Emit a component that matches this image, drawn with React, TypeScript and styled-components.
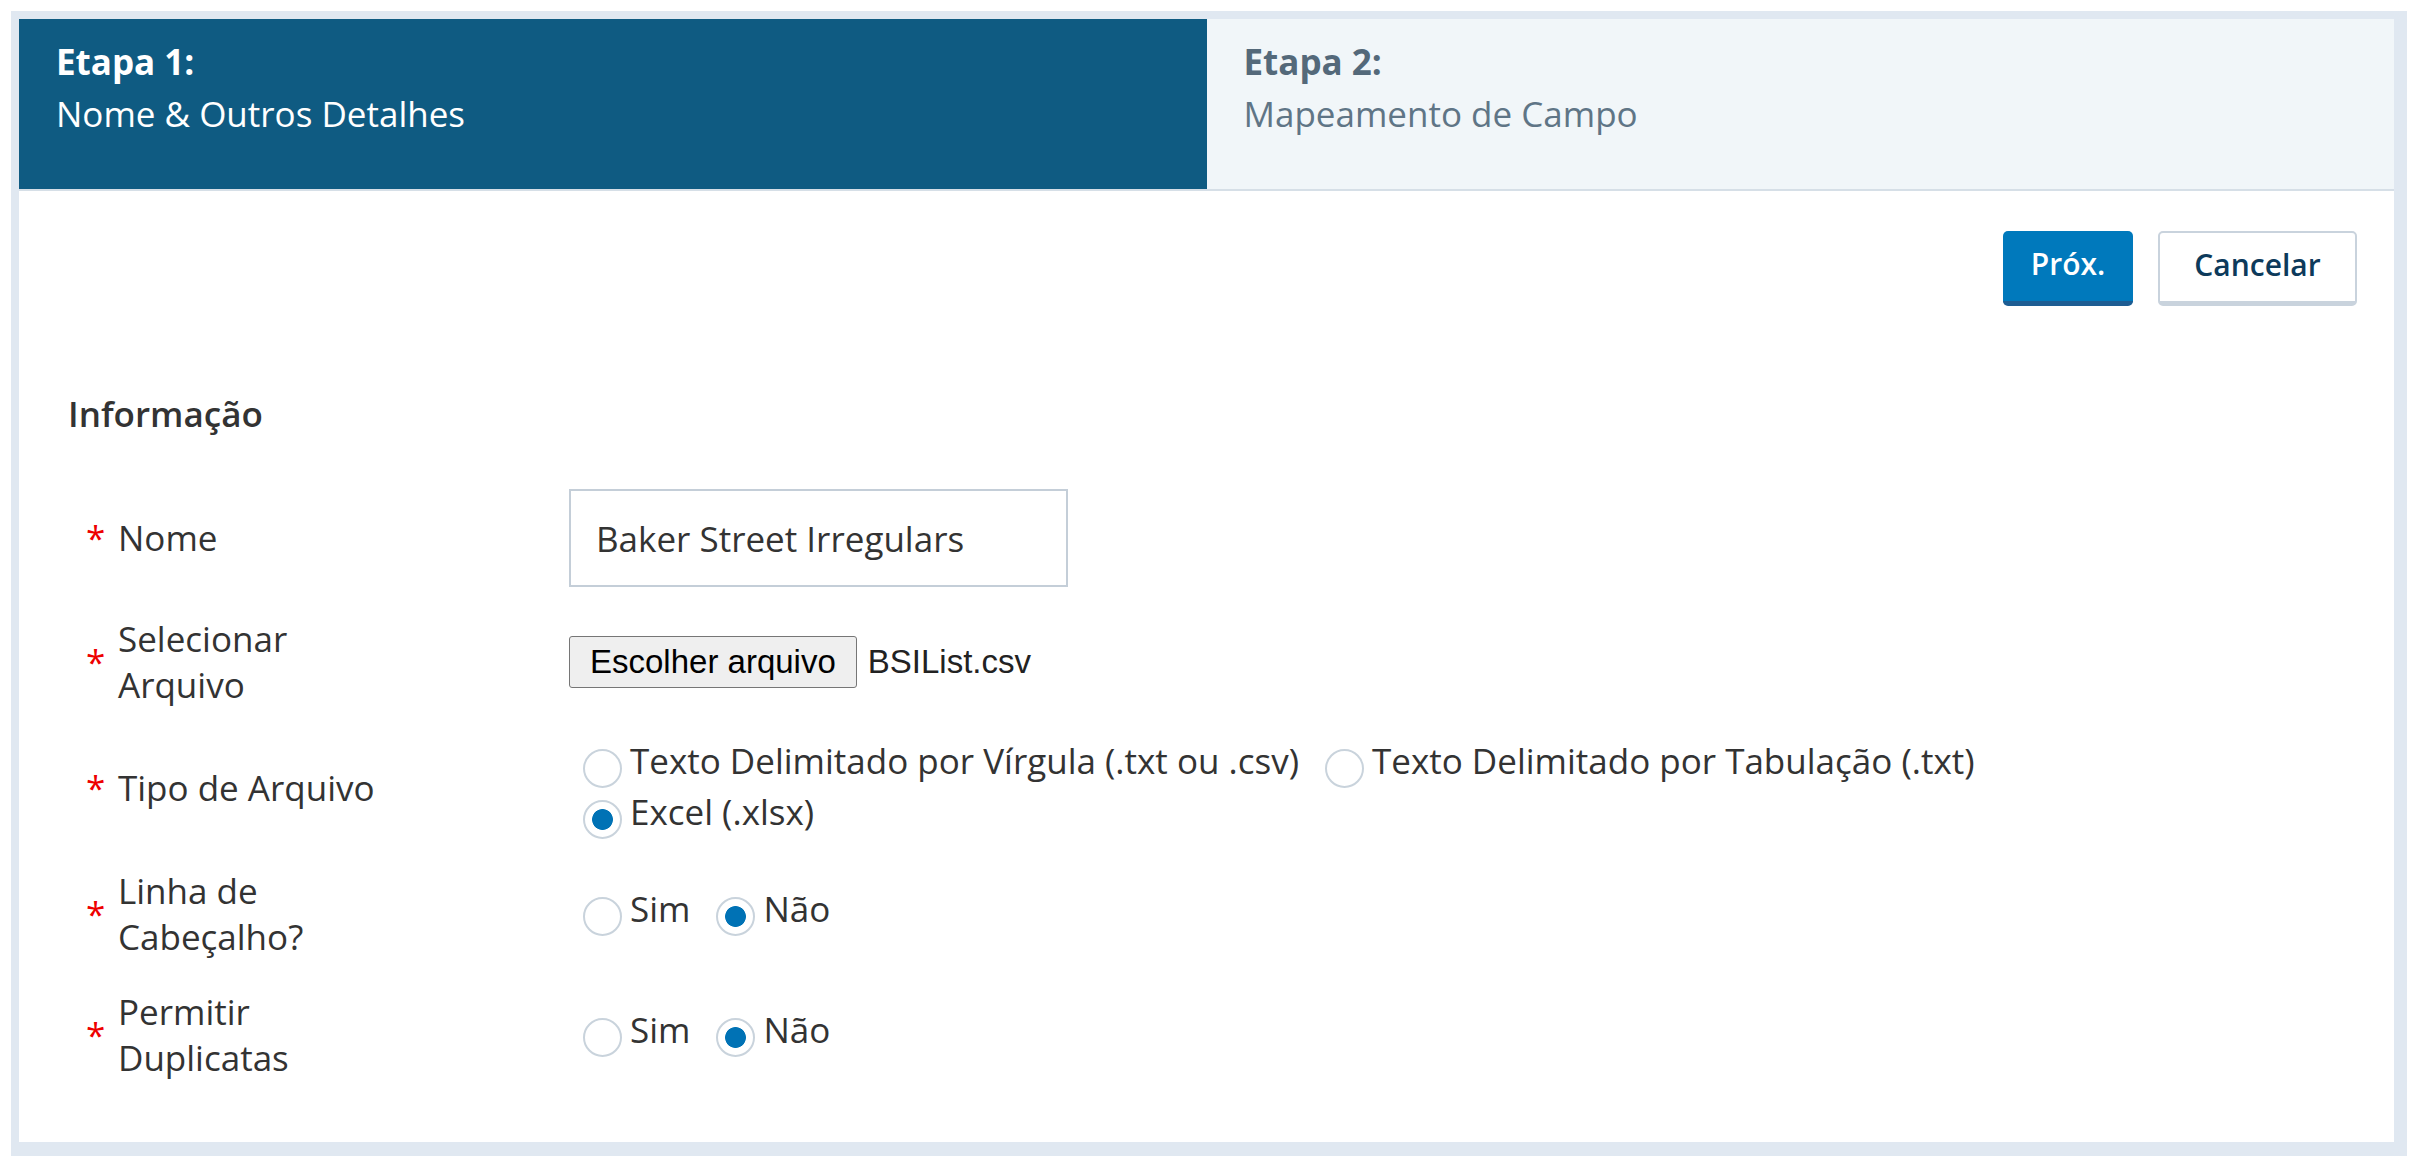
import React from "react";
import styled, { createGlobalStyle, css } from "styled-components";

const GlobalStyle = createGlobalStyle`
  html, body {
    margin: 0;
    padding: 0;
    background: #ffffff;
  }
  body {
    font-family: "Open Sans", "Noto Sans", Arial, sans-serif;
    color: #333333;
  }
  * { box-sizing: border-box; }
`;

const Frame = styled.div`
  margin: 11px 12px 13px 11px;
  border-style: solid;
  border-color: #e0e8f1;
  border-width: 8px 13px 14px 8px;
  background: #ffffff;
`;

const StepHeader = styled.div`
  display: grid;
  grid-template-columns: 1fr 1fr;
  border-bottom: 2px solid #d6dfe7;
`;

const Step = styled.div<{ $active?: boolean }>`
  height: 170px;
  padding: 20px 36px 0 37px;
  background: ${(p) => (p.$active ? "#0f5b82" : "#f1f6f9")};
  color: ${(p) => (p.$active ? "#ffffff" : "#5f7586")};
`;

const StepTitle = styled.div<{ $active?: boolean }>`
  font-size: 35px;
  line-height: 46px;
  font-weight: 700;
  margin-bottom: 6px;
  color: ${(p) => (p.$active ? "#ffffff" : "#54697a")};
`;

const StepName = styled.div`
  font-size: 35px;
  line-height: 46px;
  font-weight: 400;
`;

const Body = styled.div`
  padding: 40px 37px 61px 49px;
`;

const Toolbar = styled.div`
  display: flex;
  justify-content: flex-end;
  gap: 25px;
`;

const Button = styled.button<{ $variant: "brand" | "neutral" }>`
  height: 75px;
  display: inline-flex;
  align-items: center;
  justify-content: center;
  padding: 0 0 6px;
  font-family: "Open Sans", Arial, sans-serif;
  font-size: 30px;
  font-weight: 600;
  border-radius: 5px;
  cursor: pointer;
  ${(p) =>
    p.$variant === "brand"
      ? css`
          width: 130px;
          background: #0079bc;
          color: #ffffff;
          border: none;
          border-bottom: 5px solid #1d5d93;
        `
      : css`
          width: 199px;
          background: #ffffff;
          color: #0d3a5b;
          border: 2px solid #c9d3dd;
          border-bottom-width: 5px;
        `}
`;

const SectionTitle = styled.h2`
  margin: 85px 0 0;
  font-size: 35px;
  line-height: 46px;
  font-weight: 600;
  color: #333333;
`;

const FormGrid = styled.div`
  margin: 52px 0 0 18px;
  display: grid;
  grid-template-columns: 483px 1fr;
  row-gap: 29px;
  align-items: center;
`;

const LabelCell = styled.div`
  display: flex;
  align-items: center;
`;

const Asterisk = styled.span`
  width: 32px;
  flex-shrink: 0;
  color: #ee0000;
  font-size: 35px;
  line-height: 46px;
`;

const LabelText = styled.span`
  max-width: 280px;
  font-size: 35px;
  line-height: 46px;
  color: #333333;
`;

const Control = styled.div`
  display: flex;
  align-items: center;
  max-width: 1500px;
`;

const TextInput = styled.input`
  width: 499px;
  height: 98px;
  border: 2px solid #c4ced8;
  border-radius: 0;
  padding: 0 25px;
  font-family: "Open Sans", Arial, sans-serif;
  font-size: 35px;
  color: #333333;
  outline: none;
`;

const FileButton = styled.button`
  height: 52px;
  padding: 0 20px;
  border: 1px solid #767676;
  border-radius: 3px;
  background: #efefef;
  font-family: "Liberation Sans", Arial, sans-serif;
  font-size: 33px;
  color: #000000;
`;

const FileName = styled.span`
  margin-left: 11px;
  font-family: "Liberation Sans", Arial, sans-serif;
  font-size: 33px;
  color: #222222;
`;

const RadioGroup = styled.div<{ $raise?: boolean }>`
  display: flex;
  flex-wrap: wrap;
  column-gap: 26px;
  padding-left: 14px;
  margin-bottom: ${(p) => (p.$raise ? "8px" : "0")};
`;

const RadioOption = styled.label`
  display: inline-flex;
  align-items: flex-start;
  gap: 8px;
  font-size: 35px;
  line-height: 48px;
  color: #333333;
  cursor: pointer;
`;

const RadioInput = styled.input`
  appearance: none;
  -webkit-appearance: none;
  margin: 12px 0 0;
  width: 39px;
  height: 39px;
  flex-shrink: 0;
  border-radius: 50%;
  border: 2px solid #c9d3dc;
  background: #ffffff;
  &:checked {
    background: radial-gradient(circle, #0072b5 0 10px, #ffffff 10.8px);
  }
`;

type Option = { label: string; checked?: boolean };

function RadioField({
  name,
  options,
  raise,
}: {
  name: string;
  options: Option[];
  raise?: boolean;
}) {
  return (
    <RadioGroup $raise={raise}>
      {options.map((o) => (
        <RadioOption key={o.label}>
          <RadioInput type="radio" name={name} defaultChecked={o.checked} />
          <span>{o.label}</span>
        </RadioOption>
      ))}
    </RadioGroup>
  );
}

function Label({ children }: { children: React.ReactNode }) {
  return (
    <LabelCell>
      <Asterisk>*</Asterisk>
      <LabelText>{children}</LabelText>
    </LabelCell>
  );
}

export default function App() {
  return (
    <>
      <GlobalStyle />
      <Frame>
        <StepHeader>
          <Step $active>
            <StepTitle $active>Etapa 1:</StepTitle>
            <StepName>Nome &amp; Outros Detalhes</StepName>
          </Step>
          <Step>
            <StepTitle>Etapa 2:</StepTitle>
            <StepName>Mapeamento de Campo</StepName>
          </Step>
        </StepHeader>
        <Body>
          <Toolbar>
            <Button $variant="brand">Próx.</Button>
            <Button $variant="neutral">Cancelar</Button>
          </Toolbar>
          <SectionTitle>Informação</SectionTitle>
          <FormGrid>
            <Label>Nome</Label>
            <Control>
              <TextInput defaultValue="Baker Street Irregulars" />
            </Control>

            <Label>Selecionar Arquivo</Label>
            <Control>
              <FileButton type="button">Escolher arquivo</FileButton>
              <FileName>BSIList.csv</FileName>
            </Control>

            <Label>Tipo de Arquivo</Label>
            <Control>
              <RadioField
                name="tipo"
                options={[
                  { label: "Texto Delimitado por Vírgula (.txt ou .csv)" },
                  { label: "Texto Delimitado por Tabulação (.txt)" },
                  { label: "Excel (.xlsx)", checked: true },
                ]}
              />
            </Control>

            <Label>Linha de Cabeçalho?</Label>
            <Control>
              <RadioField
                name="cabecalho"
                raise
                options={[{ label: "Sim" }, { label: "Não", checked: true }]}
              />
            </Control>

            <Label>Permitir Duplicatas</Label>
            <Control>
              <RadioField
                name="duplicatas"
                raise
                options={[{ label: "Sim" }, { label: "Não", checked: true }]}
              />
            </Control>
          </FormGrid>
        </Body>
      </Frame>
    </>
  );
}
